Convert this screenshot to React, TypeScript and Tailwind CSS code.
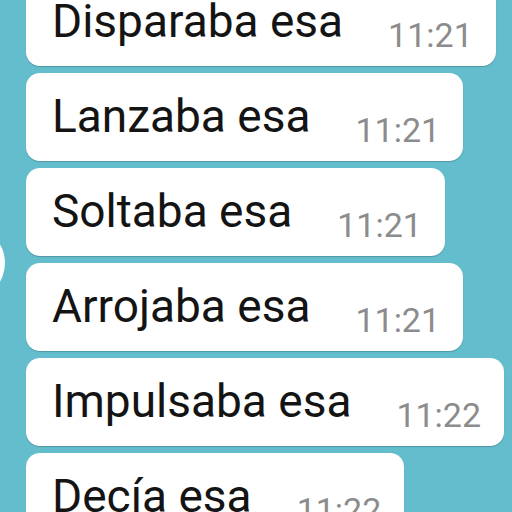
import React from "react";

const msgs = [
  { t: "Disparaba esa", h: "11:21" },
  { t: "Lanzaba esa", h: "11:21" },
  { t: "Soltaba esa", h: "11:21" },
  { t: "Arrojaba esa", h: "11:21" },
  { t: "Impulsaba esa", h: "11:22" },
  { t: "Decía esa", h: "11:22" },
];

export default function App() {
  return (
    <div
      className="relative w-[512px] h-[512px] overflow-hidden bg-[#63bdcd]"
      style={{ fontFamily: "Roboto, 'Liberation Sans', sans-serif" }}
    >
      <div className="absolute left-[-69px] top-[226px] w-[74px] h-[74px] rounded-full bg-white" />
      <div className="flex flex-col items-start gap-[7px] pl-[26px] mt-[-22px]">
        {msgs.map((m, i) => (
          <div
            key={i}
            className="flex items-end bg-white rounded-[14px] pl-[26px] pr-[23px] pt-[17px] pb-[19px] shadow-[0_1px_1px_rgba(0,0,0,0.2)]"
          >
            <span className="text-[46px] leading-[52px] text-[#141414] whitespace-nowrap">{m.t}</span>
            <span className="ml-[45px] text-[34px] leading-[24px] text-[#8c8c8c] whitespace-nowrap">{m.h}</span>
          </div>
        ))}
      </div>
    </div>
  );
}
